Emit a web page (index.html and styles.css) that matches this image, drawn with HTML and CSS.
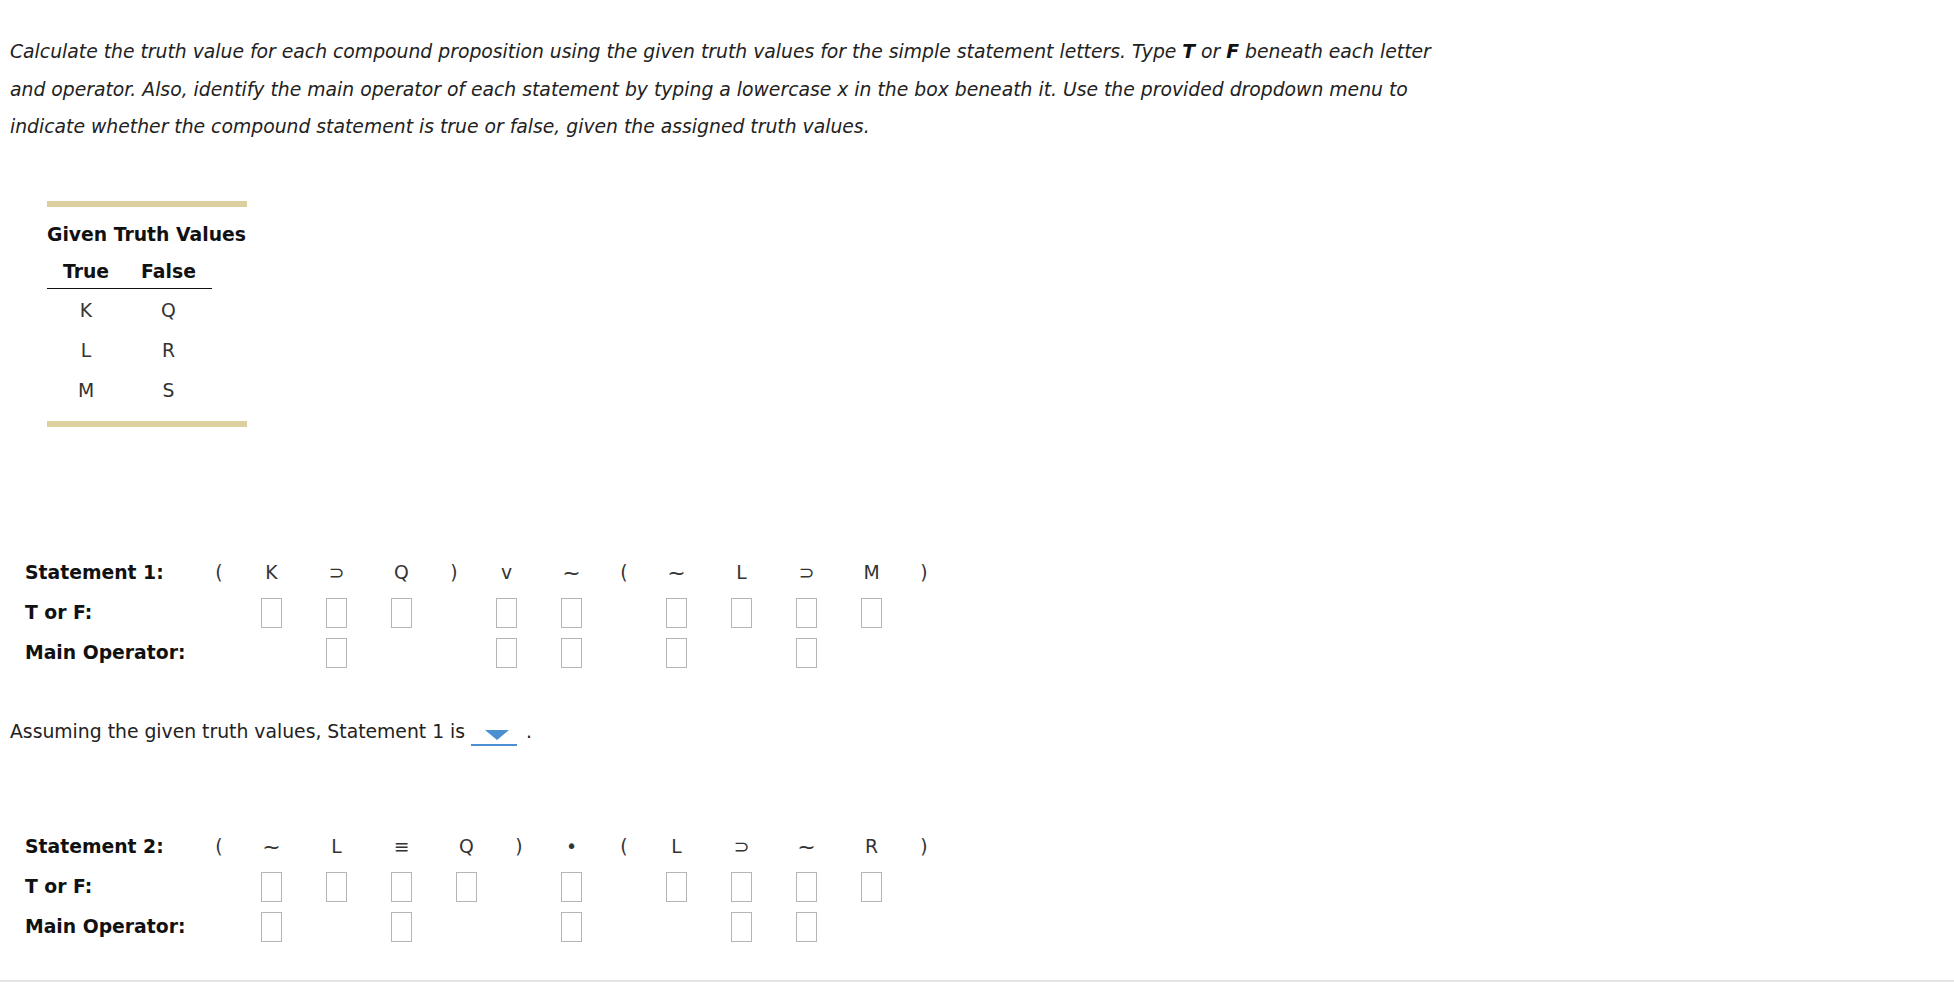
FILE: index.html
```html
<!DOCTYPE html>
<html lang="en">
<head>
<meta charset="utf-8">
<title>Truth values</title>
<link rel="stylesheet" href="styles.css">
</head>
<body>
<div class="page">
  <p class="intro">Calculate the truth value for each compound proposition using the given truth values for the simple statement letters. Type <b>T</b> or <b>F</b> beneath each letter<br>and operator. Also, identify the main operator of each statement by typing a lowercase x in the box beneath it. Use the provided dropdown menu to<br>indicate whether the compound statement is true or false, given the assigned truth values.</p>

  <div class="given">
    <div class="given-title">Given Truth Values</div>
    <table class="tv">
      <thead><tr><th class="c1">True</th><th class="c2">False</th></tr></thead>
      <tbody>
        <tr><td>K</td><td>Q</td></tr>
        <tr><td>L</td><td>R</td></tr>
        <tr><td>M</td><td>S</td></tr>
      </tbody>
    </table>
  </div>

  <div class="stmt s1">
    <div class="lbl">Statement 1:</div>
    <div class="sym">(</div><div class="sym">K</div><div class="sym">&#8835;</div><div class="sym">Q</div><div class="sym">)</div><div class="sym">v</div><div class="sym tilde">~</div><div class="sym">(</div><div class="sym tilde">~</div><div class="sym">L</div><div class="sym">&#8835;</div><div class="sym">M</div><div class="sym">)</div>

    <div class="lbl">T or F:</div>
    <div class="cell"></div><div class="cell"><span class="box"></span></div><div class="cell"><span class="box"></span></div><div class="cell"><span class="box"></span></div><div class="cell"></div><div class="cell"><span class="box"></span></div><div class="cell"><span class="box"></span></div><div class="cell"></div><div class="cell"><span class="box"></span></div><div class="cell"><span class="box"></span></div><div class="cell"><span class="box"></span></div><div class="cell"><span class="box"></span></div><div class="cell"></div>

    <div class="lbl">Main Operator:</div>
    <div class="cell"></div><div class="cell"></div><div class="cell"><span class="box"></span></div><div class="cell"></div><div class="cell"></div><div class="cell"><span class="box"></span></div><div class="cell"><span class="box"></span></div><div class="cell"></div><div class="cell"><span class="box"></span></div><div class="cell"></div><div class="cell"><span class="box"></span></div><div class="cell"></div><div class="cell"></div>
  </div>

  <p class="assume">Assuming the given truth values, Statement 1 is <span class="select"><span class="caret"></span></span> .</p>

  <div class="stmt s2">
    <div class="lbl">Statement 2:</div>
    <div class="sym">(</div><div class="sym tilde">~</div><div class="sym">L</div><div class="sym">&#8801;</div><div class="sym">Q</div><div class="sym">)</div><div class="sym">&#8226;</div><div class="sym">(</div><div class="sym">L</div><div class="sym">&#8835;</div><div class="sym tilde">~</div><div class="sym">R</div><div class="sym">)</div>

    <div class="lbl">T or F:</div>
    <div class="cell"></div><div class="cell"><span class="box"></span></div><div class="cell"><span class="box"></span></div><div class="cell"><span class="box"></span></div><div class="cell"><span class="box"></span></div><div class="cell"></div><div class="cell"><span class="box"></span></div><div class="cell"></div><div class="cell"><span class="box"></span></div><div class="cell"><span class="box"></span></div><div class="cell"><span class="box"></span></div><div class="cell"><span class="box"></span></div><div class="cell"></div>

    <div class="lbl">Main Operator:</div>
    <div class="cell"></div><div class="cell"><span class="box"></span></div><div class="cell"></div><div class="cell"><span class="box"></span></div><div class="cell"></div><div class="cell"></div><div class="cell"><span class="box"></span></div><div class="cell"></div><div class="cell"></div><div class="cell"><span class="box"></span></div><div class="cell"><span class="box"></span></div><div class="cell"></div><div class="cell"></div>
  </div>
</div>
</body>
</html>
```

FILE: styles.css
```css
html, body {
  margin: 0;
  padding: 0;
  background: #fff;
  overflow: hidden;
}

body {
  font-family: "DejaVu Sans", Verdana, sans-serif;
  font-size: 18.8px;
  color: #222;
}

.page {
  height: 982px;
  box-sizing: border-box;
  padding: 33px 0 0 10px;
  border-bottom: 2px solid #e4e4e4;
}

.intro {
  margin: 0;
  font-style: italic;
  line-height: 37.5px;
  white-space: nowrap;
}

.intro b {
  font-weight: bold;
  color: #111;
}

.given {
  margin: 55px 0 0 37px;
  width: 200px;
  border-top: 6px solid #dcd0a0;
  border-bottom: 6px solid #dcd0a0;
  padding-bottom: 12px;
}

.given-title {
  margin-top: 17px;
  line-height: 22px;
  font-weight: bold;
  color: #111;
  white-space: nowrap;
}

.tv {
  margin-top: 8px;
  border-collapse: collapse;
  width: 165px;
}

.tv th {
  padding: 8px 0 6px;
  line-height: 20px;
  font-weight: bold;
  color: #111;
  border-bottom: 1px solid #111;
  text-align: center;
}

.tv th.c1 { width: 78px; }
.tv th.c2 { width: 87px; }

.tv td {
  padding: 12px 0 8px;
  line-height: 20px;
  text-align: center;
  color: #333;
}

.stmt {
  margin-left: 15px;
  display: grid;
  grid-template-rows: repeat(3, 40px);
  align-items: center;
}

.s1 {
  margin-top: 126px;
  grid-template-columns: 174px 40px 65px 65px 65px 40px 65px 65px 40px 65px 65px 65px 65px 40px;
}

.s2 {
  margin-top: 83px;
  grid-template-columns: 174px 40px 65px 65px 65px 65px 40px 65px 40px 65px 65px 65px 65px 40px;
}

.lbl {
  font-weight: bold;
  color: #111;
  white-space: nowrap;
}

.sym {
  text-align: center;
  color: #333;
}

.sym.tilde {
  font-size: 22px;
}

.cell {
  display: flex;
  justify-content: center;
  align-items: center;
  height: 40px;
}

.box {
  display: block;
  width: 21px;
  height: 30px;
  box-sizing: border-box;
  border: 1px solid #b5b5b5;
  background: #fff;
}

.assume {
  margin: 47px 0 0;
  height: 24px;
  line-height: 24px;
  color: #222;
}

.select {
  display: inline-flex;
  justify-content: center;
  align-items: center;
  width: 46px;
  height: 18px;
  border-bottom: 2px solid #4a8fcf;
  vertical-align: -2px;
  margin-right: 3px;
}

.caret {
  width: 0;
  height: 0;
  margin-left: 6px;
  border-left: 12px solid transparent;
  border-right: 12px solid transparent;
  border-top: 10px solid #4a8fcf;
}
```
